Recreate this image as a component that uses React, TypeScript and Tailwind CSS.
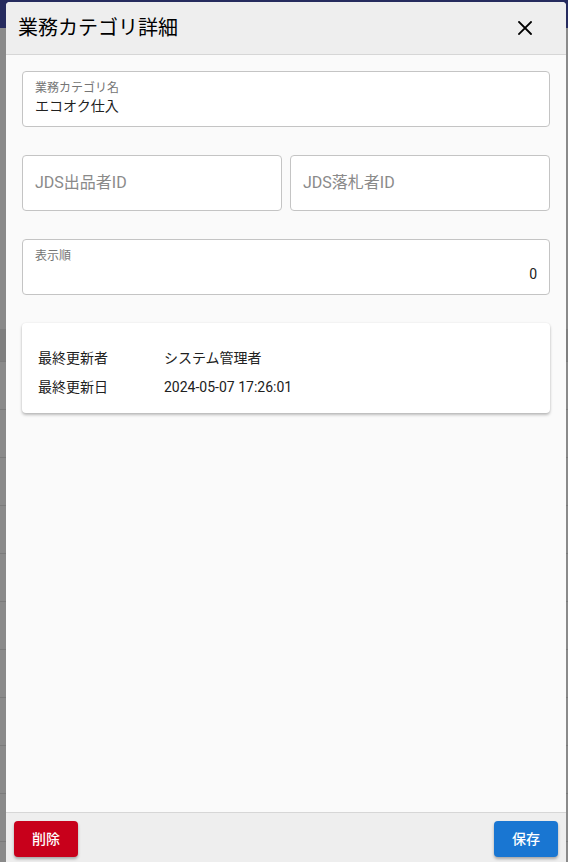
import { useState } from 'react';

const FONT = "font-['Roboto','Noto_Sans_CJK_JP',sans-serif]";

const backdropRows = Array.from({ length: 11 });

const Field = ({
  label,
  value,
  placeholder,
  alignRight,
  className = '',
}: {
  label?: string;
  value?: string;
  placeholder?: string;
  alignRight?: boolean;
  className?: string;
}) => {
  if (!label) {
    return (
      <div className={`flex h-[56px] items-center rounded-[4px] border border-[#c4c4c4] bg-white px-3 ${className}`}>
        <span className="text-base text-[#8a8a8a]">{placeholder}</span>
      </div>
    );
  }
  return (
    <div className={`flex h-[56px] flex-col rounded-[4px] border border-[#c4c4c4] bg-white px-3 pt-2 ${className}`}>
      <span className="h-4 text-xs leading-4 text-[#757575]">{label}</span>
      <span className={`text-sm leading-5 text-[#212121] ${alignRight ? 'text-right' : ''}`}>{value}</span>
    </div>
  );
};

export default function App() {
  const [order] = useState('0');

  return (
    <div className={`relative h-[862px] w-full overflow-hidden bg-[#8a8a8a] ${FONT}`}>
      {/* Dimmed page behind the dialog */}
      <div className="h-[28px] bg-[#262b5e]" />
      <div className="h-[301px]" />
      <div className="h-[33px] border-b border-[#7b7b7b] bg-[#7f7f7f]" />
      {backdropRows.map((_, i) => (
        <div key={i} className="h-[48px] border-b border-[#7b7b7b]" />
      ))}

      {/* Dialog */}
      <div className="absolute left-[6px] top-[2px] flex h-[863px] w-[560px] flex-col overflow-hidden rounded-t-[4px] bg-[#fafafa]">
        <div className="flex h-[53px] shrink-0 items-center justify-between border-b border-[#d6d6d6] bg-[#eeeeee] pl-3 pr-[34px]">
          <h2 className="text-[20px] text-black">業務カテゴリ詳細</h2>
          <svg width="14" height="14" viewBox="0 0 14 14" className="mt-[-1px]">
            <path d="M1 1 L13 13 M13 1 L1 13" stroke="#000" strokeWidth="1.8" strokeLinecap="square" />
          </svg>
        </div>

        <div className="flex flex-1 flex-col gap-7 px-4 pt-4">
          <Field label="業務カテゴリ名" value="エコオク仕入" />
          <div className="flex gap-2">
            <Field placeholder="JDS出品者ID" className="flex-1" />
            <Field placeholder="JDS落札者ID" className="flex-1" />
          </div>
          <Field label="表示順" value={order} alignRight />

          <div className="rounded-[4px] bg-white px-4 pb-3 pt-5 text-sm text-[#212121] shadow-[0_2px_3px_rgba(0,0,0,0.25),0_0_2px_rgba(0,0,0,0.08)]">
            <div className="flex h-[29px] items-center">
              <span className="w-[126px]">最終更新者</span>
              <span>システム管理者</span>
            </div>
            <div className="flex h-[29px] items-center">
              <span className="w-[126px]">最終更新日</span>
              <span>2024-05-07 17:26:01</span>
            </div>
          </div>
        </div>

        <div className="flex shrink-0 items-center justify-between border-t border-[#d6d6d6] bg-[#eeeeee] p-2">
          <button className="h-9 w-16 rounded-[4px] bg-[#c8001b] text-sm font-medium text-white shadow-[0_2px_3px_rgba(0,0,0,0.3)]">
            削除
          </button>
          <button className="h-9 w-16 rounded-[4px] bg-[#1976d2] text-sm font-medium text-white shadow-[0_2px_3px_rgba(0,0,0,0.3)]">
            保存
          </button>
        </div>
      </div>
    </div>
  );
}
